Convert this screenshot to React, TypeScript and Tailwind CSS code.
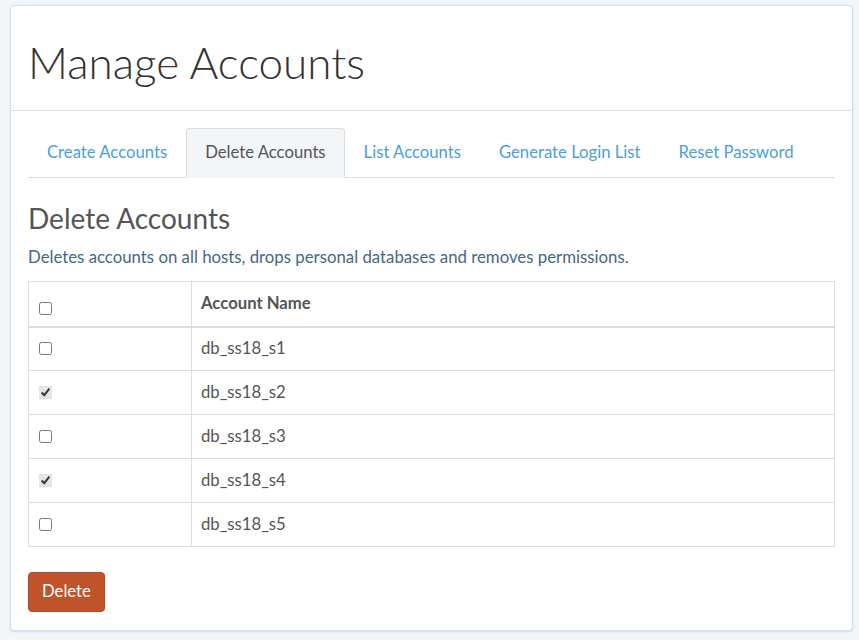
import React from 'react';

const tabs = ['Create Accounts', 'Delete Accounts', 'List Accounts', 'Generate Login List', 'Reset Password'];

const accounts = [
    { name: 'db_ss18_s1', checked: false },
    { name: 'db_ss18_s2', checked: true },
    { name: 'db_ss18_s3', checked: false },
    { name: 'db_ss18_s4', checked: true },
    { name: 'db_ss18_s5', checked: false },
];

export default function App() {
    return (
        <div className="min-h-[640px] bg-[#f3f6f9] pl-[10px] pr-[6px] pt-[5px] pb-[8px] font-['Lato',sans-serif]">
            <div className="bg-white border border-[#d5e1ec] rounded-[4px] shadow-[0_1px_2px_rgba(180,200,220,0.6)]">
                {/* header */}
                <div className="h-[105px] border-b border-[#d5e1ec] px-[17px] pt-[8px] flex items-center">
                    <h1 className="text-[44px] font-light text-[#333] leading-none">Manage Accounts</h1>
                </div>

                <div className="px-[17px] pt-[17px] pb-[18px]">
                    {/* tabs */}
                    <ul className="flex border-b border-[#ddd]">
                        {tabs.map((t) => {
                            const active = t === 'Delete Accounts';
                            return (
                                <li key={t} className="-mb-px">
                                    <a
                                        href="#"
                                        className={
                                            active
                                                ? 'block h-[50px] px-[18px] leading-[46px] text-[16.7px] text-[#555] bg-[#f3f6f9] border border-[#ddd] border-b-transparent rounded-t-[4px]'
                                                : 'block h-[50px] px-[18px] leading-[46px] text-[16.7px] text-[#4ba0dc] border border-transparent'
                                        }
                                    >
                                        {t}
                                    </a>
                                </li>
                            );
                        })}
                    </ul>

                    <h3 className="mt-[23px] text-[28px] leading-[34px] text-[#555]">Delete Accounts</h3>
                    <p className="mt-[10px] text-[16.8px] leading-[24px] text-[#456885]">
                        Deletes accounts on all hosts, drops personal databases and removes permissions.
                    </p>

                    {/* accounts table */}
                    <table className="mt-[12px] w-full border-collapse border border-[#ddd] text-[16.7px]">
                        <thead>
                            <tr className="h-[45px] border-b-2 border-[#ddd]">
                                <th className="w-[163px] border-r border-[#ddd] pl-[10px] pt-[8px] text-left align-middle">
                                    <input type="checkbox" className="w-[13px] h-[13px] align-middle accent-[#e6e6e6]" />
                                </th>
                                <th className="pl-[9px] text-left font-bold text-[#555] align-middle">Account Name</th>
                            </tr>
                        </thead>
                        <tbody>
                            {accounts.map((a) => (
                                <tr key={a.name} className="h-[44px] border-b border-[#ddd]">
                                    <td className="border-r border-[#ddd] pl-[10px] align-middle">
                                        <input
                                            type="checkbox"
                                            defaultChecked={a.checked}
                                            className="w-[13px] h-[13px] align-middle -mt-[3px] accent-[#e6e6e6]"
                                        />
                                    </td>
                                    <td className="pl-[9px] text-[#555] align-middle">{a.name}</td>
                                </tr>
                            ))}
                        </tbody>
                    </table>

                    <button className="mt-[25px] h-[40px] px-[13px] rounded-[4px] bg-[#c1532b] border border-[#b04a25] text-white text-[16.7px]">
                        Delete
                    </button>
                </div>
            </div>
        </div>
    );
}
